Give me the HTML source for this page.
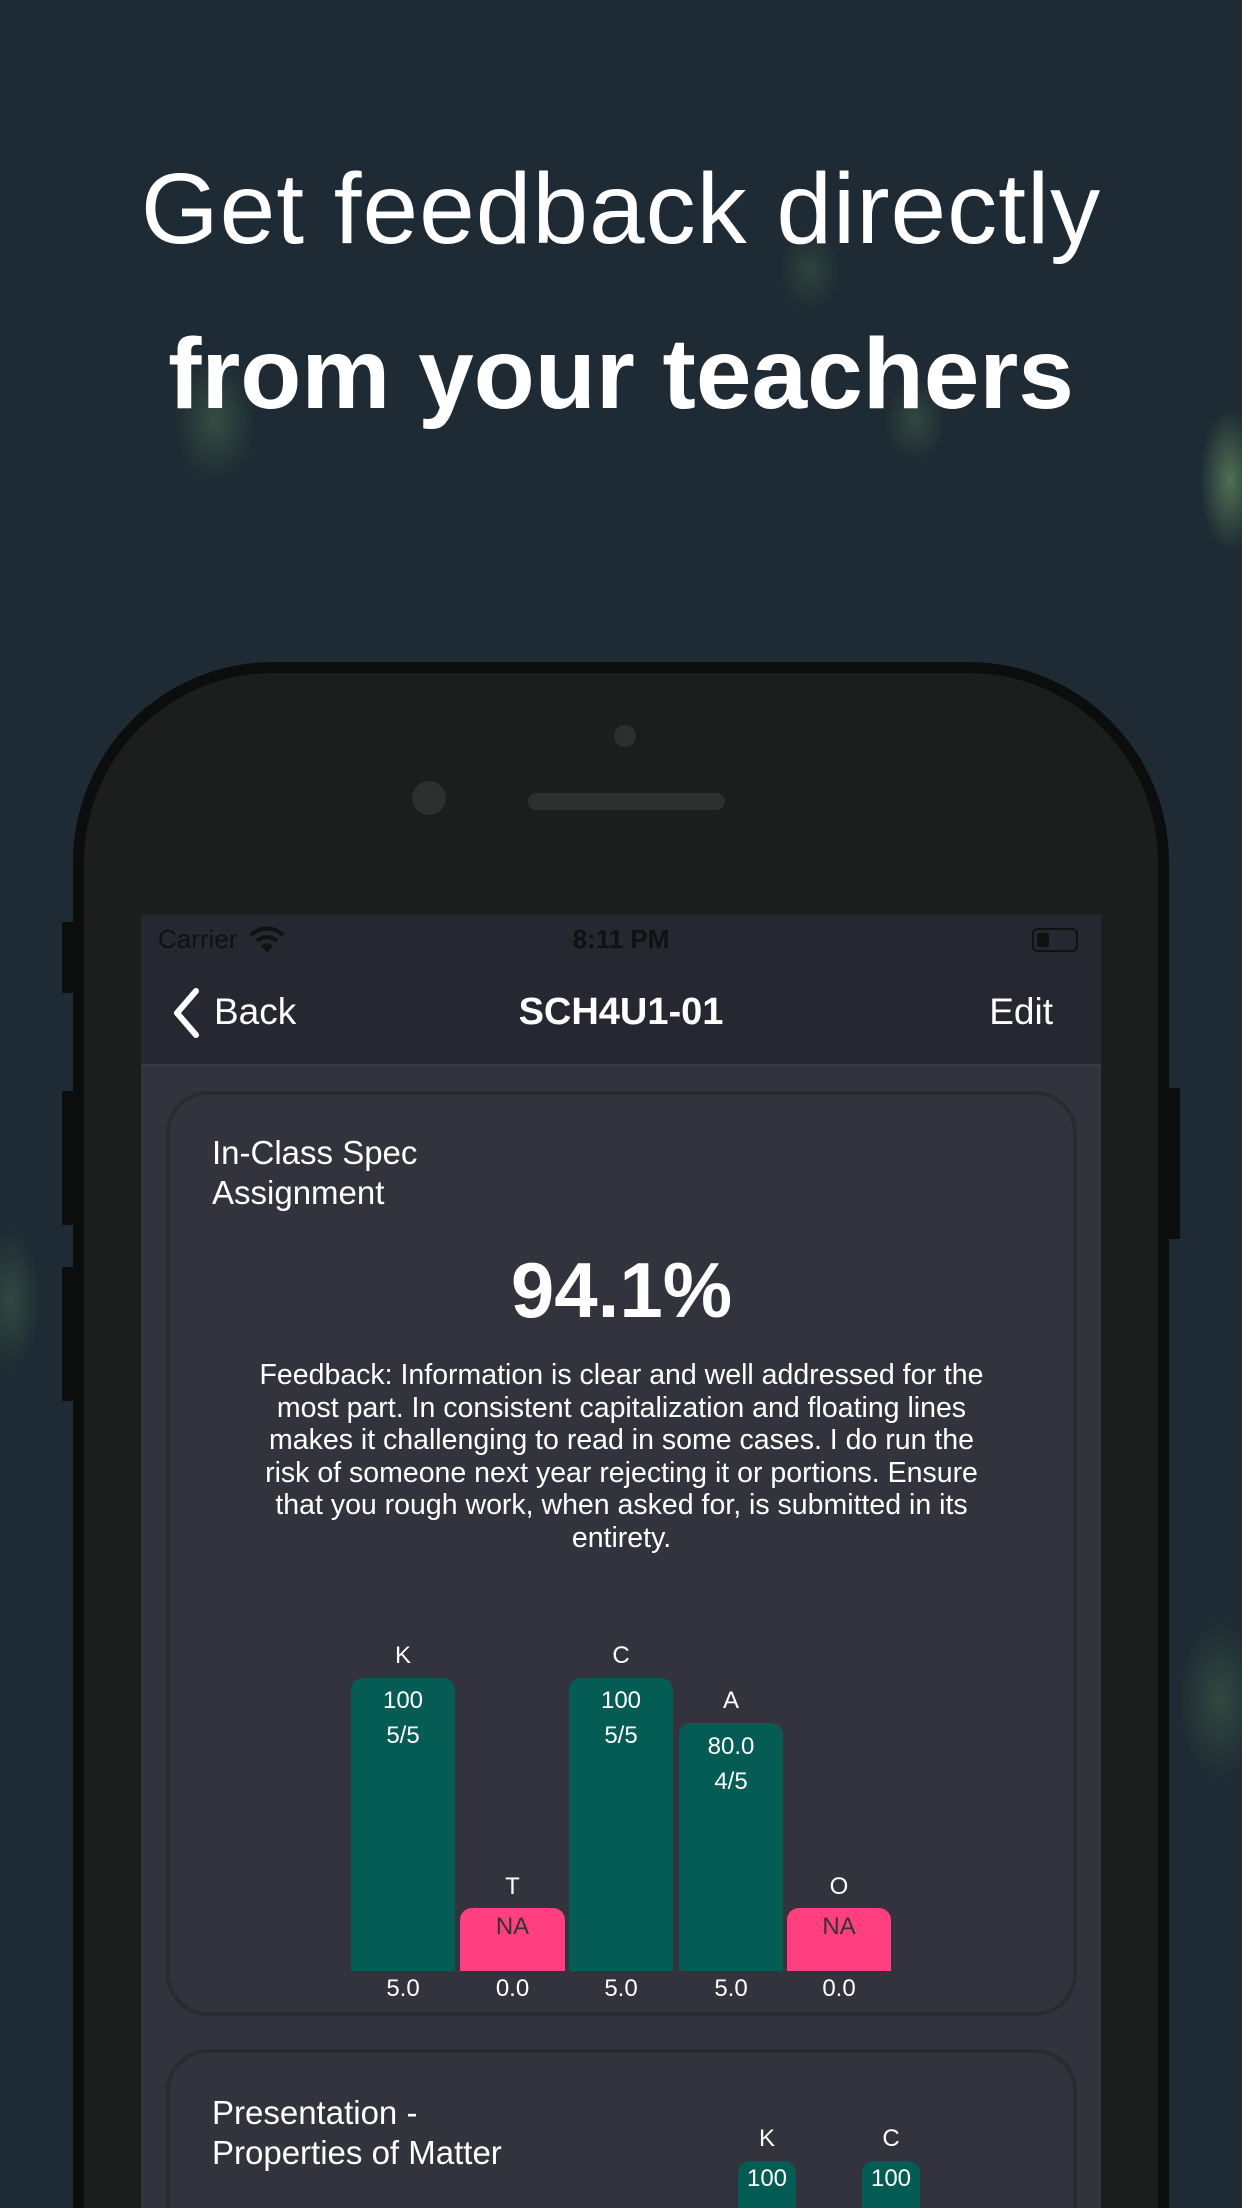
<!DOCTYPE html>
<html style="width:1242px;height:2208px;overflow:hidden"><head><meta charset="utf-8"><style>
*{margin:0;padding:0;box-sizing:border-box}
body{width:1242px;height:2208px;overflow:hidden;position:relative;font-family:"Liberation Sans",sans-serif;
background:
radial-gradient(ellipse 30px 70px at 1230px 480px,rgba(120,170,110,.55),transparent),
radial-gradient(ellipse 40px 60px at 215px 420px,rgba(90,140,90,.35),transparent),
radial-gradient(ellipse 30px 40px at 915px 420px,rgba(90,140,90,.3),transparent),
radial-gradient(ellipse 30px 40px at 810px 270px,rgba(90,140,90,.25),transparent),
radial-gradient(ellipse 40px 80px at 1220px 1700px,rgba(90,140,90,.3),transparent),
radial-gradient(ellipse 30px 70px at 10px 1300px,rgba(90,140,90,.3),transparent),
#1f2b34;}
.abs{position:absolute}
h1{position:absolute;left:0;width:1242px;text-align:center;color:#fff;font-weight:normal}
.phone{left:73px;top:662px;width:1096px;height:1546px;background:#1c1e1d;border:11px solid #0c0d0d;border-bottom:0;border-radius:200px 200px 0 0}
.btn{background:#0c0d0d}
.screen{left:141px;top:915px;width:960px;height:1293px;background:#33333d;overflow:hidden}
.card{position:absolute;left:25px;width:911px;border:4px solid #2a2a32;border-radius:42px;background:#33333d;overflow:hidden}
.t{position:absolute;color:#fff;text-align:center}
.bar{position:absolute;border-radius:12px 12px 0 0}
.g{background:#055c55}.p{background:#ff3f7f}
</style></head><body>
<h1 style="top:152px;font-size:100px;letter-spacing:1px">Get feedback directly</h1>
<h1 style="top:317px;font-size:100px;font-weight:bold">from your teachers</h1>

<div class="abs btn" style="left:62px;top:922px;width:12px;height:71px"></div>
<div class="abs btn" style="left:62px;top:1091px;width:12px;height:134px"></div>
<div class="abs btn" style="left:62px;top:1267px;width:12px;height:134px"></div>
<div class="abs btn" style="left:1168px;top:1088px;width:12px;height:151px"></div>
<div class="abs phone"></div>
<div class="abs" style="left:614px;top:725px;width:22px;height:22px;border-radius:50%;background:#2e302f"></div>
<div class="abs" style="left:412px;top:781px;width:34px;height:34px;border-radius:50%;background:#2e302f"></div>
<div class="abs" style="left:528px;top:793px;width:197px;height:17px;border-radius:9px;background:#2e302f"></div>

<div class="abs screen">
  <div class="abs" style="left:0;top:0;width:960px;height:151px;background:#262730;border-bottom:2px solid #3a3a44"></div>
  <div class="t" style="left:17px;top:9px;font-size:26px;color:#111;text-align:left">Carrier</div>
  <svg class="abs" style="left:108px;top:10px" width="36" height="30" viewBox="0 0 36 30"><path d="M2 10 A23 23 0 0 1 34 10" stroke="#111" stroke-width="4" fill="none"/><path d="M8 16 A15 15 0 0 1 28 16" stroke="#111" stroke-width="4" fill="none"/><path d="M18 28 L12 21 A8 8 0 0 1 24 21Z" fill="#111"/></svg>
  <div class="t" style="left:380px;width:200px;top:9px;font-size:26px;color:#111;font-weight:bold">8:11 PM</div>
  <div class="abs" style="left:891px;top:13px;width:46px;height:24px;border:2px solid #111;border-radius:6px"><div style="margin:3px;width:12px;height:14px;background:#111;border-radius:2px"></div></div>
  <svg class="abs" style="left:30px;top:72px" width="30" height="52" viewBox="0 0 30 52"><path d="M25 4 L6 26 L25 48" stroke="#fff" stroke-width="6" fill="none" stroke-linecap="round" stroke-linejoin="round"/></svg>
  <div class="t" style="left:73px;top:76px;font-size:37px;text-align:left">Back</div>
  <div class="t" style="left:280px;width:400px;top:76px;font-size:38px;font-weight:bold">SCH4U1-01</div>
  <div class="t" style="left:800px;width:112px;top:76px;font-size:37px;text-align:right">Edit</div>

  <div class="card" style="top:176px;height:925px">
    <div class="t" style="left:42px;top:38px;font-size:33px;text-align:left;line-height:40px">In-Class Spec<br>Assignment</div>
    <div class="t" style="left:0;width:903px;top:150px;font-size:78px;font-weight:bold">94.1%</div>
    <div class="t" style="left:80px;width:743px;top:264px;font-size:28.5px;line-height:32.5px">Feedback: Information is clear and well addressed for the most part. In consistent capitalization and floating lines makes it challenging to read in some cases. I do run the risk of someone next year rejecting it or portions. Ensure that you rough work, when asked for, is submitted in its entirety.</div>
  </div>
  <div class="abs" style="left:0;top:0">
    <div class="t" style="left:210px;width:104px;top:727px;font-size:24px">K</div>
    <div class="bar g" style="left:210px;top:763px;width:104px;height:293px"></div>
    <div class="t" style="left:210px;width:104px;top:768px;font-size:24px;line-height:35px">100<br>5/5</div>
    <div class="t" style="left:319px;width:105px;top:958px;font-size:24px">T</div>
    <div class="bar p" style="left:319px;top:993px;width:105px;height:63px"></div>
    <div class="t" style="left:319px;width:105px;top:998px;font-size:24px;color:#333">NA</div>
    <div class="t" style="left:428px;width:104px;top:727px;font-size:24px">C</div>
    <div class="bar g" style="left:428px;top:763px;width:104px;height:293px"></div>
    <div class="t" style="left:428px;width:104px;top:768px;font-size:24px;line-height:35px">100<br>5/5</div>
    <div class="t" style="left:538px;width:104px;top:772px;font-size:24px">A</div>
    <div class="bar g" style="left:538px;top:808px;width:104px;height:248px"></div>
    <div class="t" style="left:538px;width:104px;top:814px;font-size:24px;line-height:35px">80.0<br>4/5</div>
    <div class="t" style="left:646px;width:104px;top:958px;font-size:24px">O</div>
    <div class="bar p" style="left:646px;top:993px;width:104px;height:63px"></div>
    <div class="t" style="left:646px;width:104px;top:998px;font-size:24px;color:#333">NA</div>
    <div class="t" style="left:210px;width:104px;top:1060px;font-size:24px">5.0</div>
    <div class="t" style="left:319px;width:105px;top:1060px;font-size:24px">0.0</div>
    <div class="t" style="left:428px;width:104px;top:1060px;font-size:24px">5.0</div>
    <div class="t" style="left:538px;width:104px;top:1060px;font-size:24px">5.0</div>
    <div class="t" style="left:646px;width:104px;top:1060px;font-size:24px">0.0</div>
  </div>
  <div class="card" style="top:1134px;height:159px;border-bottom:0;border-radius:42px 42px 0 0">
    <div class="t" style="left:42px;top:40px;font-size:33px;text-align:left;line-height:40px">Presentation -<br>Properties of Matter</div>
  </div>
  <div class="t" style="left:597px;width:58px;top:1210px;font-size:24px">K</div>
  <div class="bar g" style="left:597px;top:1246px;width:58px;height:47px"></div>
  <div class="t" style="left:597px;width:58px;top:1250px;font-size:24px">100</div>
  <div class="t" style="left:721px;width:58px;top:1210px;font-size:24px">C</div>
  <div class="bar g" style="left:721px;top:1246px;width:58px;height:47px"></div>
  <div class="t" style="left:721px;width:58px;top:1250px;font-size:24px">100</div>
</div>
</body></html>
